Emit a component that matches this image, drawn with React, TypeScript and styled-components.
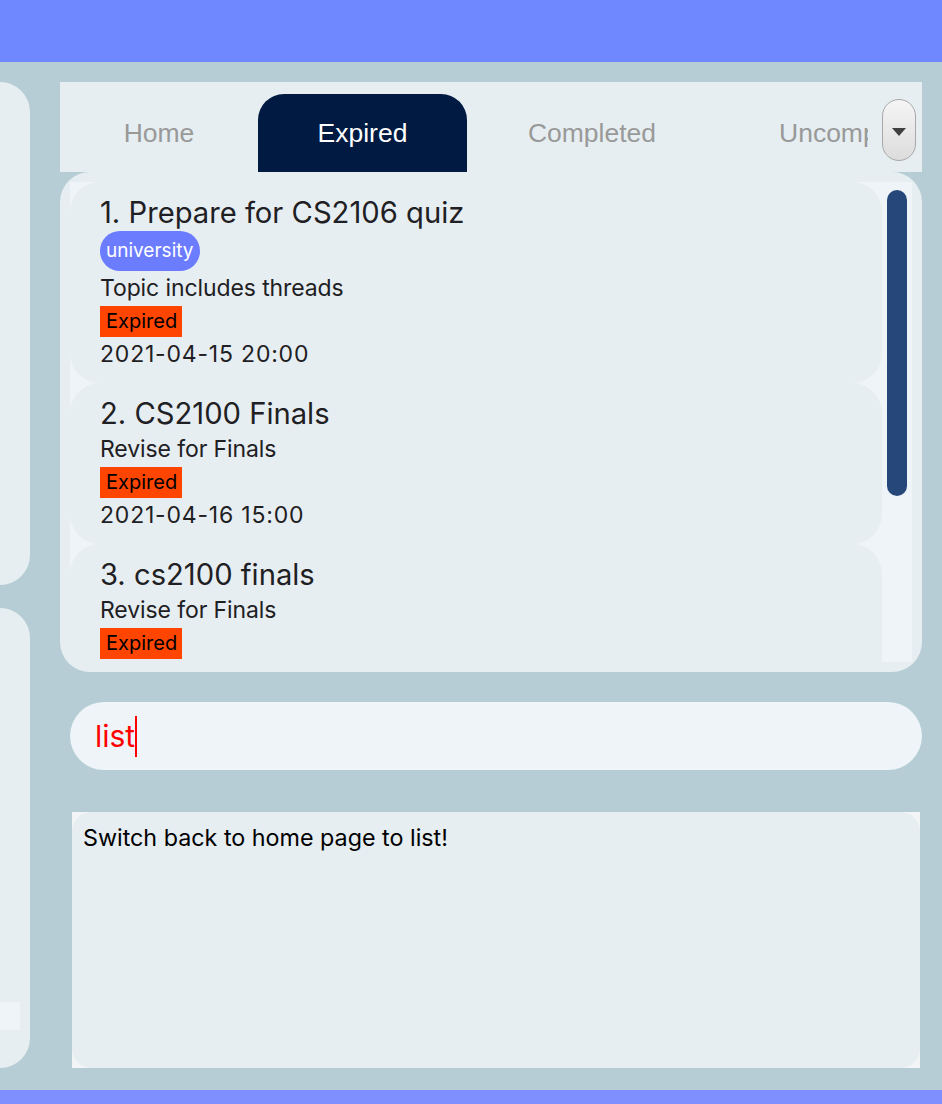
import styled, { createGlobalStyle } from "styled-components";

const GlobalStyle = createGlobalStyle`
	body {
		margin: 0;
		font-family: Inter, "Noto Sans", sans-serif;
	}
`;

const Page = styled.div`
	width: 942px;
	height: 1104px;
	background: #b6cdd5;
	display: flex;
	flex-direction: column;
	overflow: hidden;
`;
const TopBar = styled.div`
	height: 62px;
	background: #6f87ff;
	flex-shrink: 0;
`;
const BottomBar = styled.div`
	height: 14px;
	background: #7f8fff;
	flex-shrink: 0;
`;
const Main = styled.div`
	flex: 1;
	display: flex;
	gap: 30px;
	padding: 20px 20px 22px 0;
`;
const SideColumn = styled.div`
	width: 30px;
	display: flex;
	flex-direction: column;
	gap: 23px;
`;
const SidePanel = styled.div<{ $h: number }>`
	height: ${(p) => p.$h}px;
	background: #e6eef1;
	border-radius: 0 30px 30px 0;
	display: flex;
	flex-direction: column;
	justify-content: flex-end;
	padding-bottom: 38px;
	box-sizing: border-box;
`;
const SideStub = styled.div`
	width: 20px;
	height: 28px;
	background: #eef4f7;
`;
const Content = styled.div`
	flex: 1;
	display: flex;
	flex-direction: column;
`;
const TabBar = styled.div`
	height: 90px;
	background: #e6eef1;
	display: flex;
	align-items: flex-end;
	position: relative;
`;
const TabStrip = styled.div`
	width: 808px;
	height: 78px;
	display: flex;
	overflow: hidden;
`;
const Tab = styled.div<{ $w: number; $active?: boolean; $pad?: number }>`
	flex-shrink: 0;
	width: ${(p) => p.$w}px;
	display: flex;
	align-items: center;
	justify-content: ${(p) => (p.$pad ? "flex-start" : "center")};
	padding-left: ${(p) => p.$pad || 0}px;
	box-sizing: border-box;
	font-family: "Liberation Sans", Arial, sans-serif;
	font-size: 26.5px;
	color: ${(p) => (p.$active ? "#ffffff" : "#999999")};
	background: ${(p) => (p.$active ? "#001a42" : "transparent")};
	border-radius: 26px 26px 0 0;
	white-space: nowrap;
`;
const DropButton = styled.div`
	position: absolute;
	left: 822px;
	top: 17px;
	width: 34px;
	height: 62px;
	box-sizing: border-box;
	border: 1.5px solid #a8a8a8;
	border-radius: 17px;
	background: linear-gradient(#f5f5f5, #dcdcdc);
	display: flex;
	align-items: center;
	justify-content: center;
`;
const Triangle = styled.div`
	width: 0;
	height: 0;
	border-left: 7px solid transparent;
	border-right: 7px solid transparent;
	border-top: 8px solid #404040;
	margin-top: 4px;
`;
const ListPanel = styled.div`
	height: 500px;
	background: #e6eef1;
	border-radius: 30px;
	padding: 10px;
	box-sizing: border-box;
	display: flex;
`;
const ListView = styled.div`
	flex: 1;
	background: #eef4f7;
	display: flex;
	overflow: hidden;
`;
const Cells = styled.div`
	width: 812px;
	display: flex;
	flex-direction: column;
`;
const Cell = styled.div`
	flex-shrink: 0;
	background: #e6eef1;
	border-radius: 30px;
	padding: 13px 30px 13px;
	display: flex;
	flex-direction: column;
	align-items: flex-start;
	color: #1f2023;
`;
const Title = styled.div`
	font-size: 29.2px;
	line-height: 36px;
`;
const Tag = styled.div`
	background: #6b7cff;
	color: #ffffff;
	font-size: 19px;
	line-height: 40px;
	padding: 0 6px;
	border-radius: 20px;
`;
const Line = styled.div`
	font-size: 23px;
	line-height: 31px;
	margin-top: 2px;
	letter-spacing: -0.1px;
`;
const DateLine = styled(Line)`
	letter-spacing: 0.8px;
`;
const Badge = styled.div`
	background: #ff4500;
	color: #000000;
	font-size: 20px;
	line-height: 31px;
	padding: 0 5px 0 6px;
	margin-top: 2px;
`;
const ScrollTrack = styled.div`
	width: 30px;
	display: flex;
	justify-content: center;
	padding-top: 8px;
`;
const ScrollThumb = styled.div`
	width: 20px;
	height: 306px;
	border-radius: 10px;
	background: #26477a;
`;
const CommandBox = styled.div`
	margin: 30px 0 0 10px;
	height: 68px;
	border-radius: 34px;
	background: #eef4f7;
	display: flex;
	align-items: center;
	padding-left: 25px;
`;
const CommandText = styled.span`
	font-size: 30px;
	color: #ff0000;
`;
const Caret = styled.span`
	display: inline-block;
	width: 2px;
	height: 41px;
	background: #ff0000;
`;
const ResultOuter = styled.div`
	margin: 42px 2px 0 12px;
	height: 256px;
	background: #f3f4f5;
	display: flex;
`;
const ResultBox = styled.div`
	flex: 1;
	background: #e6eef1;
	border-radius: 20px;
	padding: 11px 11px;
	font-size: 23.3px;
	color: #000000;
`;

interface ITask {
	title: string;
	tag?: string;
	desc: string;
	date?: string;
}

const tasks: ITask[] = [
	{ title: "1. Prepare for CS2106 quiz", tag: "university", desc: "Topic includes threads", date: "2021-04-15 20:00" },
	{ title: "2. CS2100 Finals", desc: "Revise for Finals", date: "2021-04-16 15:00" },
	{ title: "3. cs2100 finals", desc: "Revise for Finals", date: "2021-04-16 15:00" },
];

function App() {
	return (
		<Page>
			<GlobalStyle />
			<TopBar />
			<Main>
				<SideColumn>
					<SidePanel $h={503} />
					<SidePanel $h={460}>
						<SideStub />
					</SidePanel>
				</SideColumn>
				<Content>
					<TabBar>
						<TabStrip>
							<Tab $w={198}>Home</Tab>
							<Tab $w={209} $active>
								Expired
							</Tab>
							<Tab $w={250}>Completed</Tab>
							<Tab $w={200} $pad={62}>
								Uncompleted
							</Tab>
						</TabStrip>
						<DropButton>
							<Triangle />
						</DropButton>
					</TabBar>
					<ListPanel>
						<ListView>
							<Cells>
								{tasks.map((t) => (
									<Cell key={t.title}>
										<Title>{t.title}</Title>
										{t.tag && <Tag>{t.tag}</Tag>}
										<Line>{t.desc}</Line>
										<Badge>Expired</Badge>
										<DateLine>{t.date}</DateLine>
									</Cell>
								))}
							</Cells>
							<ScrollTrack>
								<ScrollThumb />
							</ScrollTrack>
						</ListView>
					</ListPanel>
					<CommandBox>
						<CommandText>list</CommandText>
						<Caret />
					</CommandBox>
					<ResultOuter>
						<ResultBox>Switch back to home page to list!</ResultBox>
					</ResultOuter>
				</Content>
			</Main>
			<BottomBar />
		</Page>
	);
}

export default App;
